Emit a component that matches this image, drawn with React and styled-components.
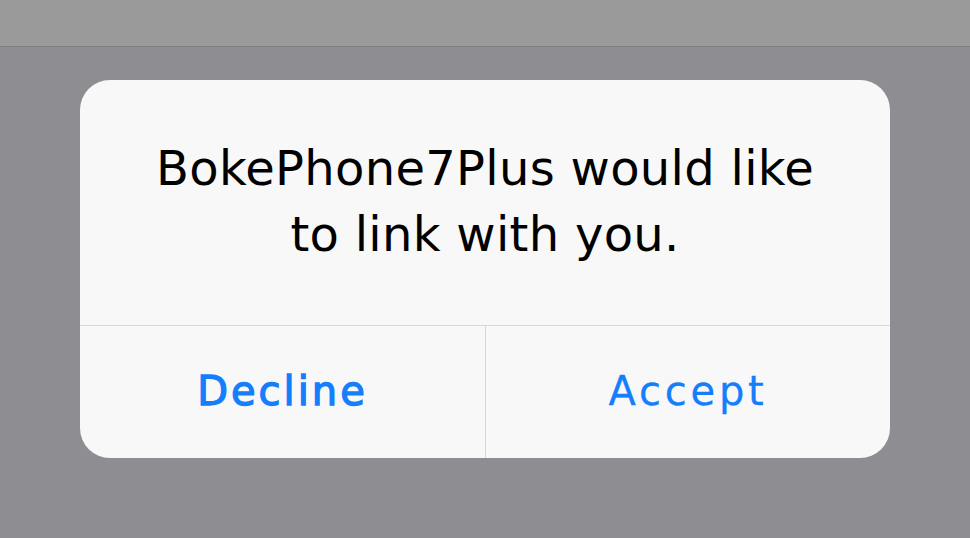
import styled, { createGlobalStyle } from "styled-components";

const GlobalStyle = createGlobalStyle`
    html, body {
        margin: 0;
        padding: 0;
        background: #8e8d92;
        font-family: "DejaVu Sans", "Open Sans", sans-serif;
    }
`

const Screen = styled.div`
    width: 970px;
    height: 538px;
    overflow: hidden;
    background: #8e8d92;
`

const TopBar = styled.div`
    height: 46px;
    background: #9a9a9a;
    border-bottom: 1px solid #7d7d7f;
    overflow: hidden;
    display: flex;
`

// only the tails of the title above are still on screen
const Glyph = styled.span`
    display: block;
    margin-left: ${ props => props.$gap }px;
    margin-top: -43px;
    line-height: 40px;
    font-size: 40px;
    color: #4a4a4a;
`

const Alert = styled.div`
    margin: 33px 0 0 80px;
    width: 810px;
    height: 378px;
    border-radius: 30px;
    background: #f8f8f9;
    overflow: hidden;
    display: flex;
    flex-direction: column;
`

const Message = styled.div`
    box-sizing: border-box;
    height: 246px;
    padding-top: 55px;
    border-bottom: 1px solid #d6d6da;
    text-align: center;
    font-size: 48px;
    line-height: 66px;
    letter-spacing: 0.3px;
    color: #000;
`

const Actions = styled.div`
    flex: 1;
    display: grid;
    grid-template-columns: 406px 1fr;
`

const ActionButton = styled.button`
    border: none;
    background: transparent;
    padding: 0 0 2px;
    margin: 0;
    font-family: "DejaVu Sans", "Open Sans", sans-serif;
    font-size: 40px;
    font-weight: 400;
    letter-spacing: ${ props => props.$primary ? 3 : 3.8 }px;
    -webkit-text-stroke: ${ props => props.$primary ? "1.3px #147efb" : "0.3px #147efb" };
    color: #147efb;
    border-right: ${ props => props.$primary ? "1px solid #d6d6da" : "none" };
    cursor: pointer;
`

export default function App() {
    return (
        <>
            <GlobalStyle />
            <Screen>
                <TopBar>
                    <Glyph $gap={ 14 }>g</Glyph>
                    <Glyph $gap={ 66 }>y</Glyph>
                    <Glyph $gap={ 34 }>p</Glyph>
                    <Glyph $gap={ 78 }>g</Glyph>
                    <Glyph $gap={ 6 }>y</Glyph>
                </TopBar>
                <Alert>
                    <Message>
                        BokePhone7Plus would like<br />
                        to link with you.
                    </Message>
                    <Actions>
                        <ActionButton $primary>Decline</ActionButton>
                        <ActionButton>Accept</ActionButton>
                    </Actions>
                </Alert>
            </Screen>
        </>
    );
}
